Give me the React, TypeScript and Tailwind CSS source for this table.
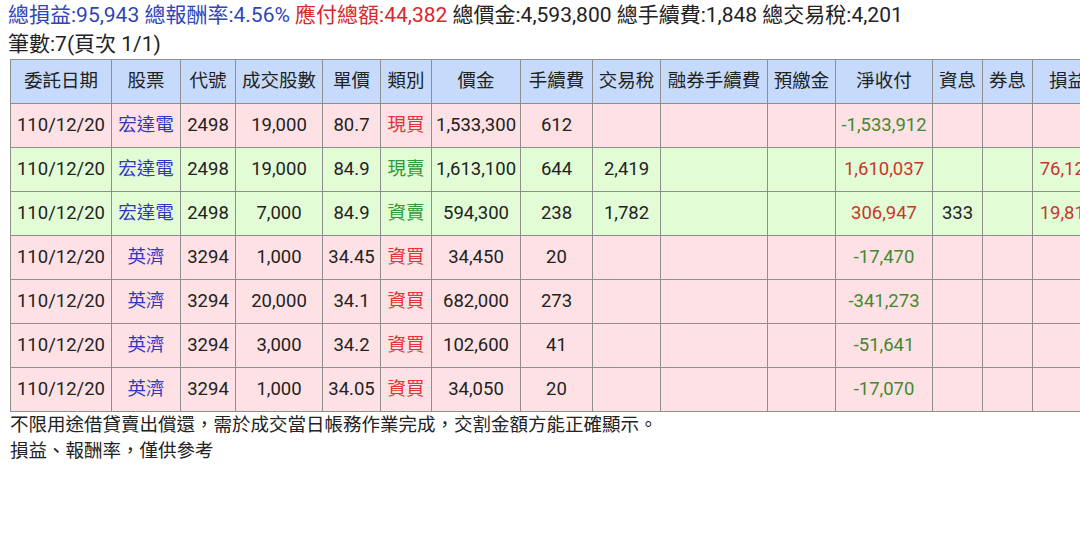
import React from 'react';

type Row = {
  date: string;
  name: string;
  code: string;
  qty: string;
  price: string;
  kind: string;
  amount: string;
  fee: string;
  tax: string;
  net: string;
  interest: string;
  pnl: string;
  rate: string;
};

const ROWS: Row[] = [
  { date: '110/12/20', name: '宏達電', code: '2498', qty: '19,000', price: '80.7', kind: '現買', amount: '1,533,300', fee: '612', tax: '', net: '-1,533,912', interest: '', pnl: '', rate: '' },
  { date: '110/12/20', name: '宏達電', code: '2498', qty: '19,000', price: '84.9', kind: '現賣', amount: '1,613,100', fee: '644', tax: '2,419', net: '1,610,037', interest: '', pnl: '76,125', rate: '4.96%' },
  { date: '110/12/20', name: '宏達電', code: '2498', qty: '7,000', price: '84.9', kind: '資賣', amount: '594,300', fee: '238', tax: '1,782', net: '306,947', interest: '333', pnl: '19,818', rate: '3.45%' },
  { date: '110/12/20', name: '英濟', code: '3294', qty: '1,000', price: '34.45', kind: '資買', amount: '34,450', fee: '20', tax: '', net: '-17,470', interest: '', pnl: '', rate: '' },
  { date: '110/12/20', name: '英濟', code: '3294', qty: '20,000', price: '34.1', kind: '資買', amount: '682,000', fee: '273', tax: '', net: '-341,273', interest: '', pnl: '', rate: '' },
  { date: '110/12/20', name: '英濟', code: '3294', qty: '3,000', price: '34.2', kind: '資買', amount: '102,600', fee: '41', tax: '', net: '-51,641', interest: '', pnl: '', rate: '' },
  { date: '110/12/20', name: '英濟', code: '3294', qty: '1,000', price: '34.05', kind: '資買', amount: '34,050', fee: '20', tax: '', net: '-17,070', interest: '', pnl: '', rate: '' },
];

const HEADERS: { label: string; w: string }[] = [
  { label: '委託日期', w: 'w-[101px]' },
  { label: '股票', w: 'w-[69px]' },
  { label: '代號', w: 'w-[55px]' },
  { label: '成交股數', w: 'w-[87px]' },
  { label: '單價', w: 'w-[58px]' },
  { label: '類別', w: 'w-[51px]' },
  { label: '價金', w: 'w-[89px]' },
  { label: '手續費', w: 'w-[72px]' },
  { label: '交易稅', w: 'w-[68px]' },
  { label: '融券手續費', w: 'w-[107px]' },
  { label: '預繳金', w: 'w-[68px]' },
  { label: '淨收付', w: 'w-[97px]' },
  { label: '資息', w: 'w-[50px]' },
  { label: '券息', w: 'w-[50px]' },
  { label: '損益', w: 'w-[70px]' },
  { label: '報酬率', w: 'w-[72px]' },
];

const cell = 'border border-[#8e8e8e] px-1 text-center whitespace-nowrap';

export default function App() {
  return (
    <div
      className="w-[1080px] h-[533px] overflow-hidden bg-white text-[18.5px] text-[#222]"
      style={{ fontFamily: 'Roboto, "Noto Sans CJK TC", sans-serif' }}
    >
      <div className="pl-[8px] h-[30px] leading-[30px] text-[21px] whitespace-nowrap">
        <span className="text-[#2f45b8]">總損益:95,943 總報酬率:4.56% </span>
        <span className="text-[#d8282b]">應付總額:44,382 </span>
        <span>總價金:4,593,800 總手續費:1,848 總交易稅:4,201</span>
      </div>
      <div className="pl-[8px] h-[29px] leading-[29px] text-[21px]">筆數:7(頁次 1/1)</div>

      <table className="ml-[10px] table-fixed border-collapse w-[1164px]">
        <thead>
          <tr className="bg-[#c6dbfb] h-[44px]">
            {HEADERS.map((h) => (
              <th key={h.label} className={`${cell} ${h.w} font-normal`}>
                {h.label}
              </th>
            ))}
          </tr>
        </thead>
        <tbody>
          {ROWS.map((r, i) => {
            const sell = r.kind.endsWith('賣');
            const neg = r.net.startsWith('-');
            return (
              <tr key={i} className={`h-[44px] ${sell ? 'bg-[#e2fcd6]' : 'bg-[#fde1e4]'}`}>
                <td className={cell}>{r.date}</td>
                <td className={`${cell} text-[#3535c4]`}>{r.name}</td>
                <td className={cell}>{r.code}</td>
                <td className={cell}>{r.qty}</td>
                <td className={cell}>{r.price}</td>
                <td className={`${cell} ${sell ? 'text-[#2f9a36]' : 'text-[#e3343a]'}`}>{r.kind}</td>
                <td className={cell}>{r.amount}</td>
                <td className={cell}>{r.fee}</td>
                <td className={cell}>{r.tax}</td>
                <td className={cell}></td>
                <td className={cell}></td>
                <td className={`${cell} ${neg ? 'text-[#3f8a2e]' : 'text-[#c8372c]'}`}>{r.net}</td>
                <td className={cell}>{r.interest}</td>
                <td className={cell}></td>
                <td className={`${cell} text-[#c8372c]`}>{r.pnl}</td>
                <td className={`${cell} text-[#c8372c]`}>{r.rate}</td>
              </tr>
            );
          })}
        </tbody>
      </table>

      <div className="pl-[10px] leading-[26px]">
        <div>不限用途借貸賣出償還，需於成交當日帳務作業完成，交割金額方能正確顯示。</div>
        <div>損益、報酬率，僅供參考</div>
      </div>
    </div>
  );
}
